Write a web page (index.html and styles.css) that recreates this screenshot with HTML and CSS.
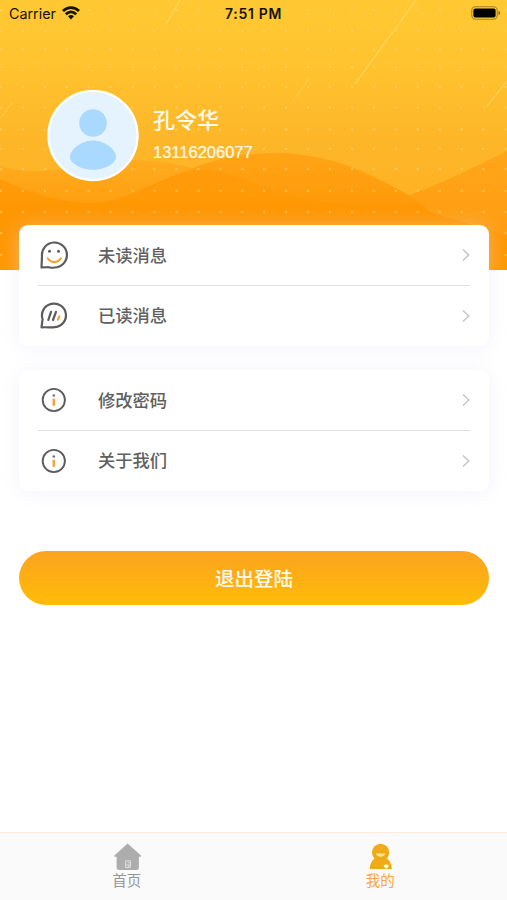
FILE: index.html
```
<!DOCTYPE html>
<html lang="zh-CN">
	<head>
		<meta charset="UTF-8">
		<title>我的</title>
		<link rel="stylesheet" href="styles.css">
	</head>
	<body>
		<div class="page">
			<!-- 顶部背景 -->
			<svg class="header-bg" width="507" height="270" viewBox="0 0 507 270">
				<defs>
					<linearGradient id="sky" x1="0" y1="0" x2="0" y2="1">
						<stop offset="0" stop-color="#ffc934"/>
						<stop offset="0.25" stop-color="#ffc32f"/>
						<stop offset="0.5" stop-color="#fdb729"/>
						<stop offset="0.8" stop-color="#ffb022"/>
						<stop offset="1" stop-color="#ffa010"/>
					</linearGradient>
					<linearGradient id="back" gradientUnits="userSpaceOnUse" x1="0" y1="158" x2="0" y2="205">
						<stop offset="0" stop-color="#ffac20"/>
						<stop offset="1" stop-color="#ff9f10"/>
					</linearGradient>
					<linearGradient id="wave" gradientUnits="userSpaceOnUse" x1="0" y1="150" x2="0" y2="245">
						<stop offset="0" stop-color="#ffa417"/>
						<stop offset="0.55" stop-color="#ff9b0a"/>
						<stop offset="1" stop-color="#ff9908"/>
					</linearGradient>
					<linearGradient id="right" gradientUnits="userSpaceOnUse" x1="0" y1="150" x2="0" y2="270">
						<stop offset="0" stop-color="#ffa61c"/>
						<stop offset="1" stop-color="#ff980a"/>
					</linearGradient>
					<linearGradient id="front" gradientUnits="userSpaceOnUse" x1="0" y1="165" x2="0" y2="210">
						<stop offset="0" stop-color="#ff9d0e"/>
						<stop offset="1" stop-color="#ff9703"/>
					</linearGradient>
				</defs>
				<rect width="507" height="270" fill="url(#sky)"/>
				<path d="M0 166C50 180 80 161 130 160C170 161 190 166 230 180V270H0Z" fill="url(#back)"/>
				<path d="M380 204C430 190 460 174 507 151V270H380Z" fill="url(#right)"/>
				<path d="M170 178C215 156 245 153 280 153C335 155 365 172 405 193C415 199 424 205 430 212L450 270H170Z" fill="url(#wave)"/>
				<path d="M0 179C30 193 60 203 95 203C140 199 165 170 206 169C255 177 270 198 330 202C370 205 400 203 422 205L430 212L507 235V270H0Z" fill="url(#front)"/>
				<g class="dots">
					<path d="M0 10H507M0 31H507M0 49.5H507M0 67H507M0 87H507M0 107.5H507M0 129.5H507M0 149H507M0 169H507M0 191H507M0 212H507M0 233H507M0 255H507"/>
				</g>
				<g class="streaks">
					<path d="M180 0L166 24M416 0L355 84M507 81L487 106"/>
					<path d="M310 77L293 101M12 102L0 119" opacity="0.6"/>
				</g>
			</svg>

			<div class="status">
				<div class="carrier">
					<span>Carrier</span>
					<svg width="18" height="14" viewBox="0 0 18 14">
						<g fill="none" stroke="#161102" stroke-width="2.7">
							<path d="M1 5C5.5 .4 12.5 .4 17 5"/>
							<path d="M3.8 8.2C7 5.2 11 5.2 14.2 8.2"/>
						</g>
						<path d="M6 10.2C7.8 8.6 10.2 8.6 12 10.2L9 13.5Z" fill="#161102"/>
					</svg>
				</div>
				<div class="time">7:51 PM</div>
				<svg class="battery" width="30" height="14" viewBox="0 0 30 14">
					<rect x=".8" y=".8" width="25.4" height="12.4" rx="3.6" fill="none" stroke="#a38426" stroke-width="1.1"/>
					<rect x="2.4" y="2.4" width="22.2" height="9.2" rx="2" fill="#000"/>
					<path d="M27.5 4.8C29.7 5.8 29.7 8.2 27.5 9.2Z" fill="#7c651e"/>
				</svg>
			</div>

			<div class="user">
				<svg class="avatar" width="92" height="92" viewBox="0 0 92 92">
					<circle cx="46" cy="45.500" r="44.600" fill="#e5f3ff" stroke="#fff" stroke-width="2.200"/>
					<circle cx="46" cy="33" r="13.800" fill="#a9d9ff"/>
					<path d="M46 50.500C57 50.500 69 59 69 67C69 73.500 58 79.700 46 79.700C34 79.700 23 73.500 23 67C23 59 35 50.500 46 50.500Z" fill="#a9d9ff"/>
				</svg>
				<div class="info">
					<div class="name">孔令华</div>
					<div class="phone">13116206077</div>
				</div>
			</div>

			<div class="card">
				<div class="item">
					<svg class="icon" width="32" height="32" viewBox="0 0 32 32">
						<path d="M3.500 28.500L4 17.200A12.500 12.500 0 1 1 16.300 28.500C13.500 29.400 11.500 28 9.500 28.200Z" fill="none" stroke="#5c5c5c" stroke-width="2.200" stroke-linejoin="round"/>
						<circle cx="11.500" cy="12.300" r="1.500" fill="#5c5c5c"/>
						<circle cx="20.500" cy="12.300" r="1.500" fill="#5c5c5c"/>
						<path d="M9.800 19.500C13 24.200 19.600 24.200 22.800 19.500" fill="none" stroke="#f9a02b" stroke-width="2.200" stroke-linecap="round"/>
					</svg>
					<span class="label">未读消息</span>
					<svg class="arrow" width="8" height="14" viewBox="0 0 8 14"><path d="M1 1.500L6.700 7L1 12.500"/></svg>
				</div>
				<div class="item">
					<svg class="icon" width="32" height="32" viewBox="0 0 32 32">
						<path d="M3.500 27.300L4.600 19.200A12 11.800 0 1 1 16.300 27.200C13.500 27.800 11 27 3.500 27.300Z" fill="none" stroke="#5c5c5c" stroke-width="2.200" stroke-linejoin="round"/>
						<path d="M13 11.800L10.300 20M18 11.800L15 20" stroke="#5c5c5c" stroke-width="2.200" stroke-linecap="round"/>
						<path d="M21.300 16.300L19.900 19.700" stroke="#f9a02b" stroke-width="2.200" stroke-linecap="round"/>
					</svg>
					<span class="label">已读消息</span>
					<svg class="arrow" width="8" height="14" viewBox="0 0 8 14"><path d="M1 1.500L6.700 7L1 12.500"/></svg>
				</div>
			</div>

			<div class="card">
				<div class="item">
					<svg class="icon" width="32" height="32" viewBox="0 0 32 32">
						<circle cx="15.800" cy="16" r="11.100" fill="none" stroke="#5c5c5c" stroke-width="1.900"/>
						<circle cx="15.800" cy="11.500" r="1.300" fill="#66757f"/>
						<path d="M15.800 14.700V21.800" stroke="#f5a344" stroke-width="2.600"/>
					</svg>
					<span class="label">修改密码</span>
					<svg class="arrow" width="8" height="14" viewBox="0 0 8 14"><path d="M1 1.500L6.700 7L1 12.500"/></svg>
				</div>
				<div class="item">
					<svg class="icon" width="32" height="32" viewBox="0 0 32 32">
						<circle cx="15.800" cy="16" r="11.100" fill="none" stroke="#5c5c5c" stroke-width="1.900"/>
						<circle cx="15.800" cy="11.500" r="1.300" fill="#66757f"/>
						<path d="M15.800 14.700V21.800" stroke="#f5a344" stroke-width="2.600"/>
					</svg>
					<span class="label">关于我们</span>
					<svg class="arrow" width="8" height="14" viewBox="0 0 8 14"><path d="M1 1.500L6.700 7L1 12.500"/></svg>
				</div>
			</div>

			<button class="logout">退出登陆</button>

			<!-- 底部导航 -->
			<div class="tabbar">
				<div class="tab">
					<svg width="30" height="28" viewBox="0 0 30 28">
						<path d="M15.600 .4L29 12.600Q29.500 13.800 28.200 13.800H26.900V24.500Q26.900 27 24.300 27H7.300Q4.600 27 4.600 24.500V13.800H3Q1.700 13.800 2.400 12.600Z" fill="#adadad"/>
						<path d="M13.500 17.800H18.500V24.500H13.500ZM15.500 19.800H18M13.500 22H18M16.500 22V24.500" fill="none" stroke="#dedede" stroke-width="1"/>
					</svg>
					<span>首页</span>
				</div>
				<div class="tab active">
					<svg width="30" height="28" viewBox="0 0 30 28">
						<defs>
							<linearGradient id="me" x1="0" y1="0" x2="0" y2="1">
								<stop offset="0" stop-color="#f5a91a"/>
								<stop offset="1" stop-color="#e8ae10"/>
							</linearGradient>
						</defs>
						<circle cx="15.600" cy="9.400" r="8.600" fill="url(#me)"/>
						<path d="M9.500 15.200Q15.500 19 22 15.200Q26.800 19.500 26.800 26H4.800Q4.800 19.500 9.500 15.200Z" fill="url(#me)"/>
						<path d="M10.800 10.500H20.400Q19 13.800 15.600 13.800Q12.200 13.800 10.800 10.500Z" fill="#ffe09c"/>
						<path d="M18.600 22Q21 21.200 23.600 22Q23.600 25 21 25.600Q18.600 25 18.600 22Z" fill="#fffaf0"/>
					</svg>
					<span>我的</span>
				</div>
			</div>
		</div>
	</body>
</html>
```
FILE: styles.css
```
*{
	margin: 0;
	padding: 0;
	box-sizing: border-box;
}

body{
	font-family: "Liberation Sans", "Noto Sans CJK SC", sans-serif;
	background-color: #fff;
}

.page{
	position: relative;
	display: flex;
	flex-direction: column;
	width: 507px;
	height: 900px;
	overflow: hidden;
	isolation: isolate;
}

/* 背景图在内容下面 */
.header-bg{
	position: absolute;
	left: 0;
	top: 0;
	z-index: -1;
}
.dots{
	fill: none;
	stroke: #ffd977;
	stroke-opacity: 0.6;
	stroke-width: 2;
	stroke-dasharray: 2 19.930;
}
.streaks{
	fill: none;
	stroke: #ffe17c;
	stroke-opacity: 0.6;
	stroke-width: 1.2;
}

/* 状态栏 */
.status{
	display: grid;
	grid-template-columns: 1fr auto 1fr;
	align-items: center;
	height: 27px;
	padding: 0 6px;
	font-family: Inter, "Liberation Sans", sans-serif;
	color: #161102;
}
.carrier{
	display: flex;
	align-items: center;
	gap: 6px;
	padding-left: 3px;
	font-size: 14.300px;
}
.carrier svg{
	margin-top: -2px;
}
.time{
	font-size: 14px;
	font-weight: 600;
	letter-spacing: 0.7px;
}
.battery{
	justify-self: end;
	margin-top: -1px;
}

.user{
	display: flex;
	align-items: center;
	height: 92px;
	margin: 63px 0 43px 47px;
	color: #fffaf0;
}
.info{
	margin: -2px 0 0 14px;
}
.name{
	font-size: 22px;
	line-height: 30px;
	font-weight: 500;
}
.phone{
	font-family: "Liberation Sans", sans-serif;
	font-size: 16.500px;
	line-height: 24px;
	margin-top: 4px;
	-webkit-text-stroke: 0.2px #fffaf0;
}

.card{
	height: 121px;
	margin: 0 18px 24px 19px;
	padding: 0 19px;
	background-color: #fff;
	border-radius: 9px;
	box-shadow: 0 2px 20px rgba(225, 228, 250, 0.4);
}
.item{
	display: flex;
	align-items: center;
	height: 60px;
}
.item + .item{
	height: 60px;
	border-top: 1px solid #e0e0e0;
}
.label{
	flex: 1;
	margin: -2px 0 0 28px;
	font-size: 17.300px;
	font-weight: 500;
	color: #606060;
}
.arrow{
	fill: none;
	stroke: #c8c8cb;
	stroke-width: 1.600;
}

.logout{
	height: 54px;
	margin: 36px 18px 0 19px;
	padding-bottom: 2px;
	border: none;
	border-radius: 27px;
	background: linear-gradient(#fca320, #ffbc08);
	font-family: inherit;
	font-size: 19.500px;
	font-weight: 500;
	color: #fffaf0;
}

.tabbar{
	display: flex;
	height: 68px;
	margin-top: auto;
	border-top: 1px solid #fdebd7;
	background-color: #fafafa;
}
.tab{
	flex: 1;
	display: flex;
	flex-direction: column;
	align-items: center;
	padding-top: 10px;
	font-size: 14.500px;
	line-height: 20px;
	color: #969696;
}
.active{
	color: #fba444;
}
```
